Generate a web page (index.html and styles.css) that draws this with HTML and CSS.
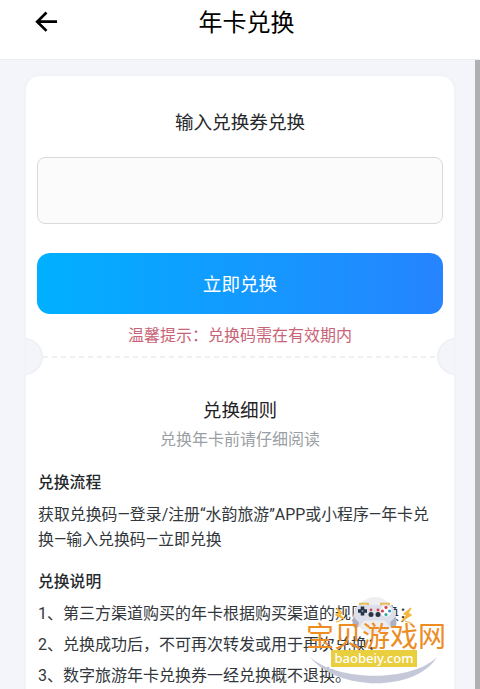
FILE: index.html
```html
<!DOCTYPE html>
<html lang="zh-CN">
<head>
    <meta charset="UTF-8">
    <meta name="viewport" content="width=device-width, initial-scale=1.0">
    <title>年卡兑换</title>
    <link rel="stylesheet" href="styles.css">
</head>
<body>
    <div class="header">
        <svg class="back" viewBox="0 0 24 24" width="24" height="24">
            <path d="M12.5 2.5 L3.2 11.7 L12.5 20.9 M3.2 11.7 H23" fill="none" stroke="#000" stroke-width="2.7"/>
        </svg>
        <h1>年卡兑换</h1>
    </div>

    <div class="page">
        <div class="card">
            <h2 class="card-title">输入兑换券兑换</h2>
            <input class="code-input" type="text" aria-label="兑换码">
            <button class="submit">立即兑换</button>
            <p class="hint">温馨提示：兑换码需在有效期内</p>

            <div class="divider">
                <svg class="dash" width="394" height="2">
                    <line x1="0" y1="1" x2="394" y2="1" stroke="#ececee" stroke-width="1.5" stroke-dasharray="5 4"/>
                </svg>
            </div>

            <h2 class="rules-title">兑换细则</h2>
            <p class="rules-sub">兑换年卡前请仔细阅读</p>

            <div class="rules">
                <h3>兑换流程</h3>
                <p class="flow">获取兑换码—登录/注册“水韵旅游”APP或小程序—年卡兑<br>换—输入兑换码—立即兑换</p>
                <h3>兑换说明</h3>
                <ul class="notes">
                    <li>1、第三方渠道购买的年卡根据购买渠道的规则兑换；</li>
                    <li>2、兑换成功后，不可再次转发或用于再次兑换；</li>
                    <li>3、数字旅游年卡兑换券一经兑换概不退换。</li>
                </ul>
            </div>
        </div>
        <div class="scrollbar"></div>
    </div>

    <div class="watermark">
        <svg class="watermark-art" viewBox="0 0 150 92" width="150" height="92">
            <circle cx="75" cy="19" r="19" fill="#ececee" opacity="0.9"/>
            <!-- crescent -->
            <path d="M10 60 C38 85 112 85 137 60 C116 95 38 95 10 60 Z" fill="#c5c8d8"/>
            <!-- gamepad -->
            <path d="M60 8 V6.7 H68 V8 M81 8 V6.7 H89 V8" fill="none" stroke="#e8b64c" stroke-width="1.8"/>
            <path d="M59 8 H90 C93 9 94 12 95 16 C97 23 98 31 92 31 C88 31 87 23.500 83 23.500 H66 C62 23.500 61 31 57 31 C51 31 52 23 54 16 C55 12 56 9 59 8 Z" fill="#dde0ea"/>
            <path d="M54 19 C55 23 58 23 59 26 C59 29 57 31 56 31 C52 31 52 25 54 19 Z M95 19 C94 23 91 23 90 26 C90 29 92 31 93 31 C97 31 97 25 95 19 Z" fill="#acb2c4"/>
            <path d="M62.5 9.500 V18.500 M58 14 H67" stroke="#28333f" stroke-width="3.6"/>
            <circle cx="62.500" cy="14" r="1" fill="#5bb0d0"/>
            <circle cx="71" cy="13" r="1.400" fill="#d94452"/>
            <circle cx="78" cy="13" r="1.400" fill="#d94452"/>
            <circle cx="71" cy="17.500" r="2.500" fill="#28333f"/>
            <circle cx="78" cy="17.500" r="2.500" fill="#28333f"/>
            <circle cx="86" cy="14" r="5.600" fill="#fff"/>
            <circle cx="86" cy="10.400" r="1.600" fill="#d94452"/>
            <circle cx="86" cy="17.600" r="1.600" fill="#35a8a2"/>
            <circle cx="82.400" cy="14" r="1.600" fill="#d94452"/>
            <circle cx="89.600" cy="14" r="1.600" fill="#3b96ce"/>
            <!-- sparks -->
            <path d="M37 11 L42 16 L39 17 L44 22 L36 18 L39 16 Z M36 25 L42 23 M111 11 L104 17 L107 18 L102 24 L111 18 L108 16 Z M105 24 L111 26" fill="#f3b73b" stroke="#f3b73b" stroke-width="1.3"/>
        </svg>
        <div class="watermark-name">宝贝游戏网</div>
        <div class="watermark-url">baobeiy.com</div>
    </div>
</body>
</html>
```

FILE: styles.css
```css
* {
    box-sizing: border-box;
    margin: 0;
    padding: 0;
}
body {
    height: 689px;
    overflow: hidden;
    position: relative;
    background: #f4f5fa;
    color: #32373c;
    font-family: Roboto, "Noto Sans CJK SC", sans-serif;
    font-size: 16px;
}
h1, h2, h3 {
    font-weight: 400;
}
.header {
    height: 60px;
    display: grid;
    grid-template-columns: 60px 1fr 60px;
    background: #fff;
    border-bottom: 1px solid #ebecef;
}
.back {
    margin: 10px 0 0 34px;
}
.header h1 {
    margin-left: 13px;
    color: #000;
    font-size: 24px;
    line-height: 46px;
    text-align: center;
}
.page {
    height: 629px;
    display: flex;
    justify-content: space-between;
    padding: 16px 0 0 26px;
}
.card {
    width: 428px;
    height: 640px;
    padding: 0 11px;
    overflow: hidden;
    background: #fff;
    border-radius: 14px;
    box-shadow: 0 0 4px rgba(60, 70, 110, 0.04);
}
.scrollbar {
    width: 5px;
    height: 640px;
    margin-top: -16px;
    background: #b0b0b2;
}
.card-title {
    padding-top: 31px;
    color: #26282b;
    font-size: 18.6px;
    line-height: 32px;
    text-align: center;
}
.code-input {
    display: block;
    width: 406px;
    height: 67px;
    margin-top: 18px;
    padding: 0 12px;
    background: #fbfbfb;
    border: 1px solid #d9d9da;
    border-radius: 8px;
}
.submit {
    display: block;
    width: 406px;
    height: 61px;
    margin-top: 29px;
    padding-bottom: 2px;
    border: none;
    border-radius: 13px;
    background: linear-gradient(90deg, #00b0ff, #2684ff);
    color: #fff;
    font-family: inherit;
    font-size: 18.6px;
}
.hint {
    margin-top: 9px;
    color: #c86477;
    font-size: 16px;
    line-height: 26px;
    text-align: center;
}
.divider {
    position: relative;
    height: 38px;
    margin: -11px -11px 0;
    padding: 18px 17px 0;
}
.dash {
    display: block;
}
/* ticket notches */
.divider::before,
.divider::after {
    content: "";
    position: absolute;
    top: 0;
    width: 37px;
    height: 37px;
    border-radius: 50%;
    background: #f4f5fa;
    box-shadow: inset 0 0 3px rgba(60, 70, 110, 0.08);
}
.divider::before {
    left: -20px;
}
.divider::after {
    right: -20px;
}
.rules-title {
    margin-top: 20px;
    color: #1f2226;
    font-size: 18.6px;
    line-height: 30px;
    text-align: center;
}
.rules-sub {
    color: #9a9fa5;
    line-height: 27px;
    text-align: center;
}
.rules {
    padding-left: 1px;
}
.rules h3 {
    padding-top: 16px;
    color: #25292e;
    font-size: 15.8px;
    font-weight: 500;
    line-height: 27px;
}
.flow {
    margin-top: 7px;
    font-size: 15.9px;
    line-height: 24.5px;
    white-space: nowrap;
}
.notes {
    margin-top: 4px;
    list-style: none;
}
.notes li {
    line-height: 30.8px;
    white-space: nowrap;
}
.watermark {
    position: absolute;
    left: 300px;
    top: 597px;
    width: 150px;
    height: 92px;
}
.watermark-art {
    position: absolute;
    left: 0;
    top: 0;
}
.watermark-name {
    position: relative;
    padding: 23px 0 0 6px;
    color: #ec8c22;
    font-size: 28px;
    line-height: 36px;
    white-space: nowrap;
}
.watermark-url {
    position: relative;
    width: 86px;
    height: 17px;
    margin: -6px 0 0 31px;
    background: #e9ce3e;
    color: #fff;
    font-family: "Noto Sans", sans-serif;
    font-size: 13px;
    font-weight: 500;
    line-height: 16px;
    text-align: center;
}
```
